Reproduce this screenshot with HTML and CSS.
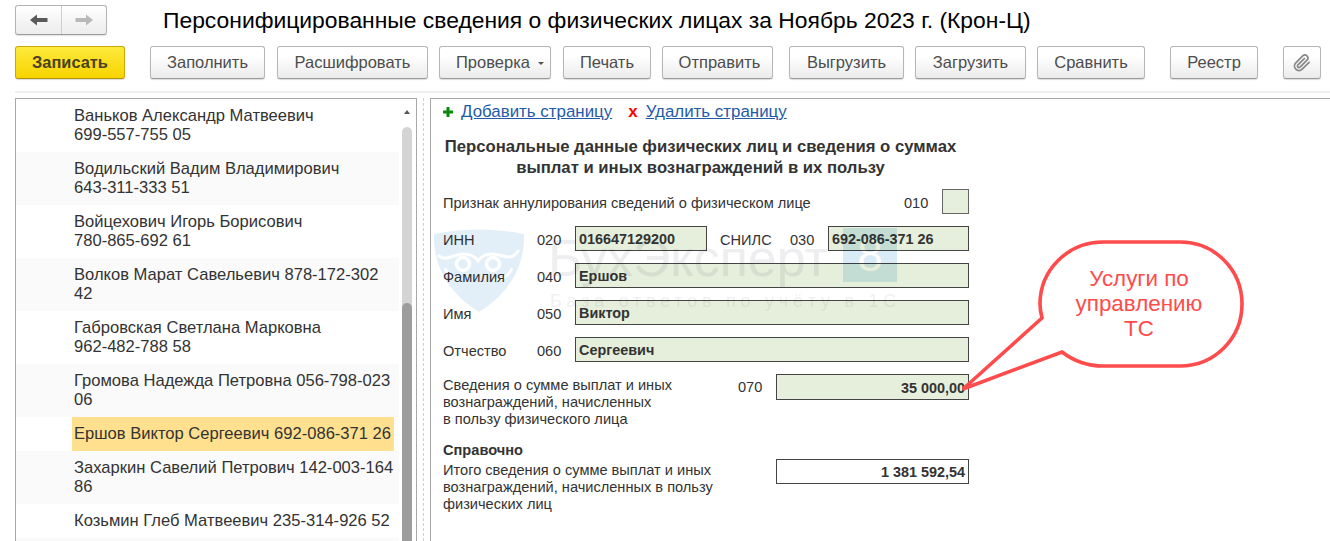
FILE: index.html
```html
<!DOCTYPE html>
<html lang="ru">
<head>
<meta charset="utf-8">
<title>Персонифицированные сведения</title>
<link rel="stylesheet" href="styles.css">
</head>
<body>
<div class="page">
  <header class="topbar">
    <div class="nav">
      <button class="nav-btn nav-back" aria-label="Назад">
        <svg width="18" height="12" viewBox="0 0 18 12"><path d="M0 6 7 0.5V4H17.5V8H7V11.5Z" fill="#5a5a5a"/></svg>
      </button>
      <button class="nav-btn" aria-label="Вперёд">
        <svg width="18" height="12" viewBox="0 0 18 12"><path d="M18 6 11 0.5V4H0.5V8H11V11.5Z" fill="#b9b9b9"/></svg>
      </button>
    </div>
    <h1 class="title">Персонифицированные сведения о физических лицах за Ноябрь 2023 г. (Крон-Ц)</h1>
  </header>

  <div class="toolbar">
    <button class="btn btn-primary w-save">Записать</button>
    <button class="btn w-fill far">Заполнить</button>
    <button class="btn w-decode">Расшифровать</button>
    <button class="btn w-check tight">Проверка<span class="caret"></span></button>
    <button class="btn w-print">Печать</button>
    <button class="btn w-send tight">Отправить</button>
    <button class="btn w-export mid">Выгрузить</button>
    <button class="btn w-import tight">Загрузить</button>
    <button class="btn w-compare tight">Сравнить</button>
    <button class="btn w-registry far">Реестр</button>
    <button class="btn w-clip far" aria-label="Вложения">
      <svg width="18" height="18" viewBox="0 0 24 24" fill="none" stroke="#8a8a8a" stroke-width="2.4" stroke-linecap="round" stroke-linejoin="round"><path d="M21.44 11.05l-9.19 9.19a6 6 0 0 1-8.49-8.49l9.19-9.19a4 4 0 0 1 5.66 5.66l-9.2 9.19a2 2 0 0 1-2.83-2.83l8.49-8.48"/></svg>
    </button>
  </div>

  <div class="band"></div>

  <main class="workspace">
    <aside class="list">
      <div class="rows">
        <div class="row"><div class="name">Ваньков Александр Матвеевич<br>699-557-755 05</div></div>
        <div class="row alt"><div class="name">Водильский Вадим Владимирович<br>643-311-333 51</div></div>
        <div class="row"><div class="name">Войцехович Игорь Борисович<br>780-865-692 61</div></div>
        <div class="row alt"><div class="name">Волков Марат Савельевич 878-172-302<br>42</div></div>
        <div class="row"><div class="name">Габровская Светлана Марковна<br>962-482-788 58</div></div>
        <div class="row alt"><div class="name">Громова Надежда Петровна 056-798-023<br>06</div></div>
        <div class="row selected"><div class="name">Ершов Виктор Сергеевич 692-086-371 26</div></div>
        <div class="row alt"><div class="name">Захаркин Савелий Петрович 142-003-164<br>86</div></div>
        <div class="row"><div class="name">Козьмин Глеб Матвеевич 235-314-926 52</div></div>
        <div class="row alt filler"></div>
      </div>
      <div class="scroll">
        <div class="scroll-up"></div>
        <div class="scroll-track"><div class="scroll-thumb"></div></div>
      </div>
    </aside>

    <div class="splitter"></div>

    <section class="form">
      <div class="links">
        <svg class="plus" width="10" height="10" viewBox="0 0 10 10"><path d="M3.5 0h3v3.5H10v3H6.5V10h-3V6.5H0v-3h3.5Z" fill="#0a8a0a"/></svg>
        <a class="link" href="#">Добавить страницу</a>
        <span class="cross">x</span>
        <a class="link" href="#">Удалить страницу</a>
      </div>

      <h2 class="heading">Персональные данные физических лиц и сведения о суммах<br>выплат и иных вознаграждений в их пользу</h2>

      <div class="fields">
        <div class="frow">
          <span class="flabel w-annul">Признак аннулирования сведений о физическом лице</span>
          <span class="code w-code-010">010</span>
          <span class="field w-box"></span>
        </div>
        <div class="frow">
          <span class="flabel w-l">ИНН</span>
          <span class="code">020</span>
          <span class="field w-inn">016647129200</span>
          <span class="flabel w-snils">СНИЛС</span>
          <span class="code">030</span>
          <span class="field w-snils-f">692-086-371 26</span>
        </div>
        <div class="frow">
          <span class="flabel w-l">Фамилия</span>
          <span class="code">040</span>
          <span class="field w-long">Ершов</span>
        </div>
        <div class="frow">
          <span class="flabel w-l">Имя</span>
          <span class="code">050</span>
          <span class="field w-long">Виктор</span>
        </div>
        <div class="frow">
          <span class="flabel w-l">Отчество</span>
          <span class="code">060</span>
          <span class="field w-long">Сергеевич</span>
        </div>
        <div class="frow top">
          <div class="flabel multi w-sum">Сведения о сумме выплат и иных<br>вознаграждений, начисленных<br>в пользу физического лица</div>
          <span class="code w-code-070">070</span>
          <span class="field num tall">35 000,00</span>
        </div>
      </div>

      <div class="ref">
        <div class="ref-text">
          <div class="ref-title">Справочно</div>
          <div class="multi">Итого сведения о сумме выплат и иных<br>вознаграждений, начисленных в пользу<br>физических лиц</div>
        </div>
        <span class="field num white">1 381 592,54</span>
      </div>
    </section>
  </main>

  <div class="watermark">
    <svg class="wm-shield" width="94" height="86" viewBox="0 0 94 86">
      <path d="M2 6Q47 -3 92 6C93 40 76 66 47 84C18 66 1 40 2 6Z" fill="#e2eff8"/>
      <g fill="none" stroke="#fff">
        <circle cx="31" cy="36" r="6.5" stroke-width="3.5"/>
        <circle cx="61" cy="36" r="6.5" stroke-width="3.5"/>
        <path d="M6 27C14 35 20 26 32 26C40 26 44 30 46 33C48 30 52 26 60 26C72 26 78 35 87 22" stroke-width="3"/>
        <path d="M13 40C16 48 22 52 30 52M80 40C77 48 70 52 62 52" stroke-width="2.5"/>
      </g>
    </svg>
    <div class="wm-brand">БухЭксперт</div>
    <div class="wm-tile">8</div>
    <div class="wm-tag">База ответов по учёту в 1С</div>
  </div>

  <div class="callout">
    <svg class="callout-shape" width="290" height="156" viewBox="958 238 290 156">
      <path d="M1062 352C1075 362 1090 366 1103 366H1180C1215 366 1242 338 1242 304C1242 270 1215 242 1180 242H1103C1068 242 1040 270 1040 304C1040 309 1041 314 1042 318L963 389Z" fill="#fff" stroke="#ff4b4b" stroke-width="3.6" stroke-linejoin="miter"/>
    </svg>
    <div class="callout-text">Услуги по<br>управлению<br>ТС</div>
  </div>
</div>
</body>
</html>
```
FILE: styles.css
```css
* { box-sizing: border-box; }
html, body { margin: 0; padding: 0; background: #fff; }
.page {
  position: relative;
  width: 1330px;
  height: 541px;
  overflow: hidden;
  font-family: "Liberation Sans", Arial, sans-serif;
  color: #333;
}
button { font-family: inherit; cursor: default; margin: 0; padding: 0; }

/* top bar */
.topbar { display: flex; align-items: center; padding: 5px 0 0 15px; height: 35px; }
.nav {
  display: flex; width: 92px; height: 30px;
  border: 1px solid #b4b4b4; border-bottom-color: #9c9c9c; border-radius: 3px;
  background: linear-gradient(#fff, #ececec);
  box-shadow: 0 1px 1px rgba(0,0,0,.12);
}
.nav-btn {
  flex: 1; border: 0; background: transparent;
  display: flex; align-items: center; justify-content: center;
}
.nav-back { border-right: 1px solid #cfcfcf; flex: 0 0 46px; }
.title { margin: 0 0 0 56px; font-size: 22.87px; font-weight: 400; color: #000; line-height: 30px; white-space: nowrap; }

/* toolbar */
.toolbar { display: flex; padding-left: 15px; margin-top: 11px; height: 33px; }
.btn {
  height: 33px; margin-left: 12px;
  border: 1px solid #b6b6b6; border-bottom-color: #9a9a9a; border-radius: 3px;
  background: linear-gradient(#fff 30%, #ebebeb);
  box-shadow: 0 1px 1px rgba(0,0,0,.14);
  font-size: 16.5px; color: #4d4d4d;
  display: flex; align-items: center; justify-content: center;
  white-space: nowrap;
}
.tight { margin-left: 11px; }
.mid { margin-left: 16px; }
.far { margin-left: 25px; }
.btn-primary {
  margin-left: 0; font-weight: 700; font-size: 16.4px; color: #4a4220;
  background: linear-gradient(#fdea3c, #f8d400);
  border-color: #c9a90a; border-bottom-color: #ae930a;
}
.w-save { width: 110px; }
.w-fill { width: 115px; }
.w-decode { width: 151px; }
.w-check { width: 112px; justify-content: flex-start; padding-left: 16px; }
.w-print { width: 88px; }
.w-send { width: 111px; padding-left: 4px; }
.w-export { width: 115px; }
.w-import { width: 111px; }
.w-compare { width: 108px; }
.w-registry { width: 88px; }
.w-clip { width: 38px; }
.caret {
  width: 0; height: 0; margin-left: 8px; margin-top: 2px;
  border: 3px solid transparent; border-top: 3px solid #555; border-bottom: 0;
}

.band { height: 2px; margin: 12px 0 0 15px; background: #f0f0f0; }

/* workspace */
.workspace { display: flex; margin: 5px 0 0 15px; height: 443px; }
.list {
  display: flex; width: 402px; height: 100%;
  border: 1px solid #a8a8a8; border-bottom: 0;
  overflow: hidden;
}
.rows { width: 383px; flex: none; }
.row {
  padding: 7px 6px 8px 56px;
  font-size: 16.57px; line-height: 19px; color: #333; white-space: nowrap;
}
.name { padding: 0 2px; }
.alt { background: #fafafa; }
.filler { height: 40px; }
.selected { padding-top: 0; padding-bottom: 0; padding-right: 5px; }
.selected .name { background: #ffe08f; padding-top: 7px; padding-bottom: 8px; }

.scroll { width: 10px; margin-left: 3px; flex: none; display: flex; flex-direction: column; align-items: center; }
.scroll-up {
  width: 0; height: 0; margin-top: 11px;
  border: 3px solid transparent; border-bottom: 4px solid #555; border-top: 0;
}
.scroll-track {
  flex: 1; width: 10px; margin-top: 13px; padding-top: 176px;
  background: #d4d4d4; border-radius: 5px 5px 0 0;
}
.scroll-thumb { height: 100%; background: #9d9d9d; border-radius: 5px 5px 0 0; }

.splitter { width: 13px; display: flex; justify-content: center; }
.splitter::before { content: ""; border-left: 1px dashed #cfcfcf; }

/* form */
.form { flex: 1; border-left: 1px solid #a8a8a8; border-top: 1px solid #a8a8a8; padding-left: 12px; }
.links { display: flex; align-items: center; height: 26px; font-size: 16.9px; }
.link { color: #1f5ba8; margin-left: 8px; }
.cross { color: #f00; font-weight: 700; font-size: 17px; margin-left: 16px; }
.heading {
  margin: 11px 0 0; width: 515px; text-align: center;
  font-size: 16.7px; line-height: 21px; font-weight: 700; color: #333; white-space: nowrap;
}
.fields { display: flex; flex-direction: column; gap: 12px; margin-top: 11px; width: 526px; font-size: 14.6px; }
.frow { display: flex; align-items: center; height: 25px; }
.frow.top { align-items: flex-start; height: 26px; }
.flabel { flex: none; padding-top: 2px; }
.w-l { width: 94px; }
.code { flex: none; width: 38px; padding-top: 2px; }
.w-annul { width: 461px; }
.w-code-010 { width: 38px; }
.w-snils { width: 70px; margin-left: 13px; }
.field {
  flex: none; height: 25px; line-height: 23px; padding: 1px 3px 0;
  border: 1px solid #444; background: #e6efdc;
  font-size: 14.4px; font-weight: 700; color: #333; white-space: nowrap;
}
.w-box { width: 27px; border-color: #666; }
.w-inn { width: 132px; }
.w-snils-f { width: 141px; }
.w-long { width: 394px; }
.num { width: 193px; text-align: right; }
.tall { height: 26px; line-height: 24px; }
.white { background: #fff; }
.multi { line-height: 17px; }
.w-sum { width: 295px; padding-top: 3px; }
.w-code-070 { padding-top: 5px; }
.ref { display: flex; margin-top: 42px; width: 526px; font-size: 14.6px; }
.ref-text { width: 333px; flex: none; }
.ref-title { font-weight: 700; line-height: 17px; margin-bottom: 3px; }
.ref .field { margin-top: 17px; }

/* watermark overlay */
.watermark { position: absolute; left: 0; top: 0; width: 0; height: 0; mix-blend-mode: multiply; pointer-events: none; }
.wm-shield { position: absolute; left: 432px; top: 228px; }
.wm-brand { position: absolute; left: 548px; top: 228px; font-size: 52px; line-height: 60px; color: #eeeef0; white-space: nowrap; }
.wm-tile {
  position: absolute; left: 843px; top: 228px; width: 54px; height: 54px;
  background: #d9ebf6; color: #fff; font-size: 46px; line-height: 54px; text-align: center;
}
.wm-tag { position: absolute; left: 550px; top: 291px; font-size: 18px; line-height: 20px; letter-spacing: 4.76px; color: #f0f0f2; white-space: nowrap; }

/* callout */
.callout { position: absolute; left: 958px; top: 238px; width: 290px; height: 156px; }
.callout-shape { position: absolute; left: 0; top: 0; }
.callout-text {
  position: absolute; left: 80px; top: 28px; width: 202px;
  text-align: center; font-size: 22.4px; line-height: 25px; color: #ff4b4b;
}
```
